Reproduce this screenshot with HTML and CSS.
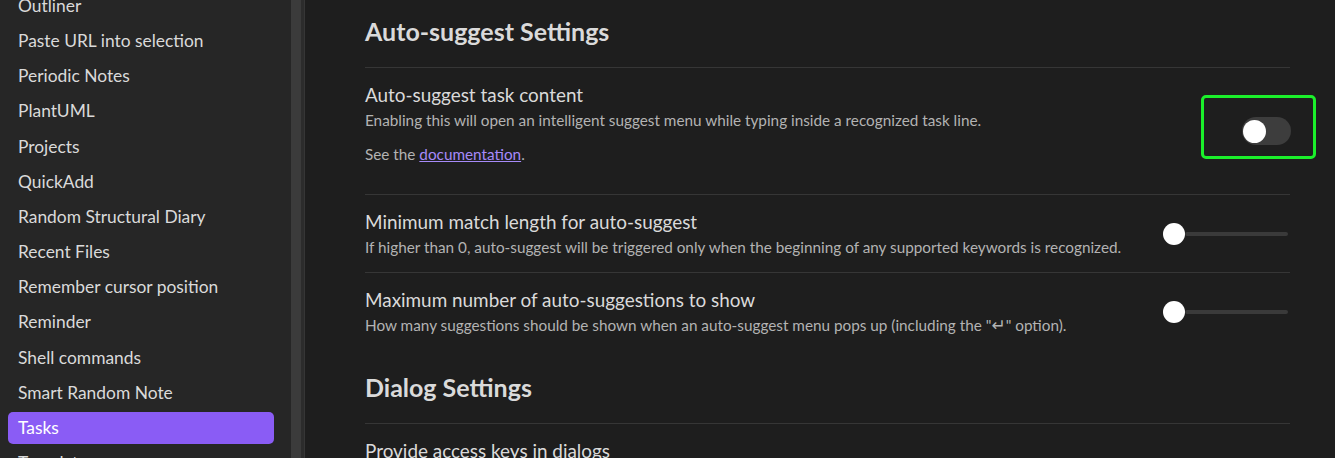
FILE: index.html
```html
<!DOCTYPE html>
<html>
<head>
<meta charset="utf-8">
<link rel="stylesheet" href="styles.css">
</head>
<body>
<div class="app">
  <aside class="sidebar">
    <nav class="nav">
      <div class="nav-item">Outliner</div>
      <div class="nav-item">Paste URL into selection</div>
      <div class="nav-item">Periodic Notes</div>
      <div class="nav-item">PlantUML</div>
      <div class="nav-item">Projects</div>
      <div class="nav-item">QuickAdd</div>
      <div class="nav-item">Random Structural Diary</div>
      <div class="nav-item">Recent Files</div>
      <div class="nav-item">Remember cursor position</div>
      <div class="nav-item">Reminder</div>
      <div class="nav-item">Shell commands</div>
      <div class="nav-item">Smart Random Note</div>
      <div class="nav-item active">Tasks</div>
      <div class="nav-item">Templater</div>
    </nav>
    <div class="scrollbar"></div>
    <div class="scroll-gap"></div>
  </aside>
  <main class="content">
    <div class="heading first">Auto-suggest Settings</div>
    <div class="item item-tall">
      <div class="info">
        <div class="name">Auto-suggest task content</div>
        <div class="desc">
          <p class="desc-p">Enabling this will open an intelligent suggest menu while typing inside a recognized task line.</p>
          <p class="desc-p desc-last">See the <a class="link" href="#">documentation</a>.</p>
        </div>
      </div>
      <div class="control">
        <div class="toggle-wrap">
          <div class="toggle"><span class="knob"></span></div>
          <div class="highlight"></div>
        </div>
      </div>
    </div>
    <div class="item">
      <div class="info">
        <div class="name">Minimum match length for auto-suggest</div>
        <div class="desc">If higher than 0, auto-suggest will be triggered only when the beginning of any supported keywords is recognized.</div>
      </div>
      <div class="control">
        <div class="slider"><span class="thumb"></span><span class="track"></span></div>
      </div>
    </div>
    <div class="item">
      <div class="info">
        <div class="name">Maximum number of auto-suggestions to show</div>
        <div class="desc">How many suggestions should be shown when an auto-suggest menu pops up (including the "<span class="enter">↵</span>" option).</div>
      </div>
      <div class="control">
        <div class="slider"><span class="thumb"></span><span class="track"></span></div>
      </div>
    </div>
    <div class="heading">Dialog Settings</div>
    <div class="item">
      <div class="info">
        <div class="name">Provide access keys in dialogs</div>
      </div>
    </div>
  </main>
</div>
</body>
</html>
```

FILE: styles.css
```css
* { box-sizing: border-box; }
html, body {
  margin: 0;
  padding: 0;
  height: 100%;
  overflow: hidden;
  background: #1e1e1e;
  font-family: Lato, "Open Sans", "DejaVu Sans", sans-serif;
  color: #dadada;
}
.app {
  display: flex;
  height: 458px;
  overflow: hidden;
}
.sidebar {
  flex: 0 0 305px;
  display: flex;
  background: #262626;
  border-right: 1px solid #363636;
}
.nav {
  flex: 0 0 291px;
  padding: 0 17px 0 8px;
  margin-top: -10px;
}
.nav-item {
  height: 32px;
  margin-bottom: 3.17px;
  padding-left: 10px;
  font-size: 17.4px;
  line-height: 32px;
  color: #dadada;
  border-radius: 5px;
  white-space: nowrap;
}
.nav-item.active {
  background: #8a5cf5;
  color: #ffffff;
}
.scrollbar {
  flex: 0 0 10px;
  background: #3b3b3b;
}
.scroll-gap {
  flex: 0 0 3px;
  background: #2c2c2c;
}
.content {
  flex: 1;
  padding: 0 45px 0 60px;
  background: #1e1e1e;
}
.heading {
  font-size: 25px;
  font-weight: 700;
  line-height: 30px;
  padding: 22px 0 21px;
  color: #dadada;
}
.heading.first {
  padding-top: 16px;
}
.item {
  display: flex;
  align-items: center;
  border-top: 1px solid #363636;
  padding: 14px 0;
}
.info {
  flex: 1;
}
.name {
  font-size: 18.9px;
  line-height: 25px;
  color: #dadada;
}
.desc {
  font-size: 15.3px;
  line-height: 21px;
  margin-top: 3px;
  color: #b3b3b3;
}
.desc-p {
  margin: 0;
}
.desc-last {
  margin-top: 13px;
  margin-bottom: 15px;
}
.link {
  color: #a68af9;
  text-decoration: underline;
}
.enter {
  font-family: "DejaVu Sans", sans-serif;
  font-size: 17px;
  line-height: 1;
}
.control {
  flex: 0 0 auto;
  display: flex;
  align-items: center;
}
.toggle-wrap {
  position: relative;
  margin-right: -1px;
}
.toggle {
  width: 49px;
  height: 28px;
  border-radius: 14px;
  background: #3d3d3d;
  display: flex;
  align-items: center;
  padding-left: 1px;
}
.knob {
  width: 23px;
  height: 23px;
  border-radius: 50%;
  background: #ffffff;
}
.highlight {
  position: absolute;
  left: -41px;
  right: -25px;
  top: -22px;
  bottom: -14px;
  border: 3px solid #1bf02b;
  border-radius: 5px;
}
.slider {
  width: 125px;
  display: flex;
  align-items: center;
  margin-right: 2px;
}
.thumb {
  flex: 0 0 22px;
  height: 22px;
  border-radius: 50%;
  background: #ffffff;
}
.track {
  flex: 1;
  height: 4px;
  background: #3a3a3a;
  border-radius: 2px;
}
```
